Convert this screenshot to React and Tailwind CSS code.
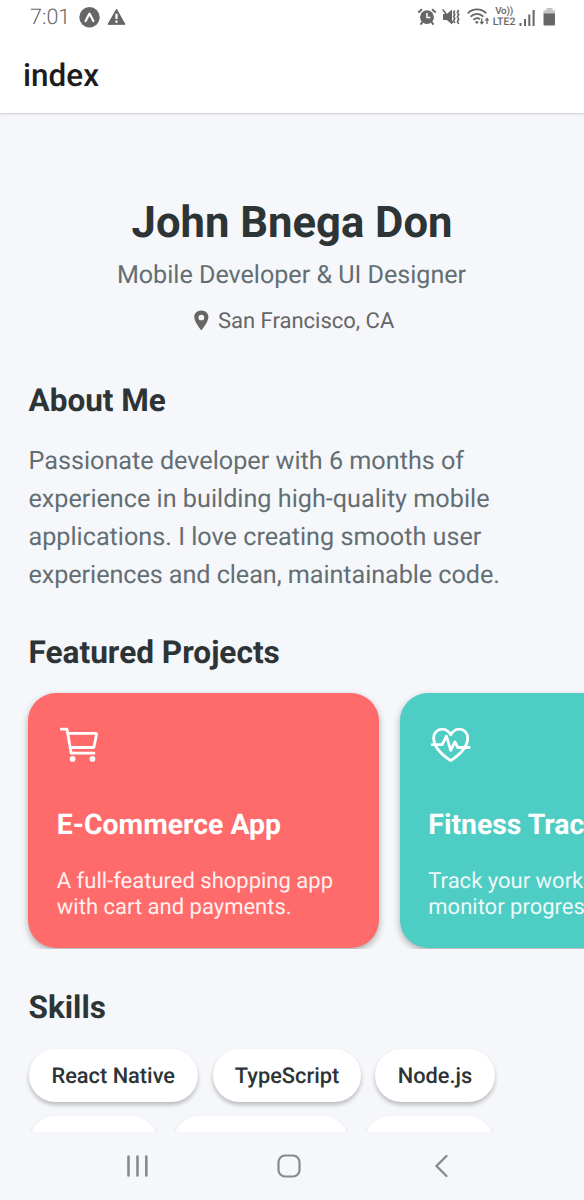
import { IoCartOutline, IoFitnessOutline, IoLocationSharp } from "react-icons/io5";

function AlarmIcon() {
  return (
    <svg width="20" height="20" viewBox="0 0 20 20" fill="none">
      <circle cx="10" cy="10.2" r="6.9" fill="#666" />
      <path d="M1.300 5.400 5 2.200M18.700 5.400 15 2.200" stroke="#666" strokeWidth="2" />
      <path d="M5.400 15 3.600 17.600M14.600 15l1.800 2.600" stroke="#666" strokeWidth="2" />
      <path d="M10 6v4.600h3.400" stroke="#fff" strokeWidth="1.500" />
    </svg>
  );
}

function MuteIcon() {
  return (
    <svg width="18" height="18" viewBox="0 0 18 18" fill="none">
      <path d="M1 6h3.800L10 1.400v15.200L4.800 12H1z" fill="#666" />
      <path d="M.6 1.500 11 15" stroke="#666" strokeWidth="1.600" />
      <path d="M12.800 2.500l-1.200 2 1.200 2-1.200 2 1.200 2-1.200 2 1.200 2.500M16.700 2l-1.300 2.300 1.300 2.300-1.300 2.300 1.300 2.300-1.300 2.300 1.300 2.500" stroke="#666" strokeWidth="1.600" />
    </svg>
  );
}

function WifiIcon() {
  return (
    <svg width="23" height="18" viewBox="0 0 23 18" fill="none" stroke="#666" strokeWidth="1.800">
      <path d="M.8 5.300C6 .1 14 .1 19.200 5.300M3.600 8.700C7.400 5 12.600 5 16.400 8.700M6.400 11.900C8.600 9.900 11.400 9.900 13 11.200" />
      <circle cx="9.800" cy="14.300" r="1.400" fill="#666" stroke="none" />
      <path d="M14.800 10.500v5M20 16v-5" strokeWidth="1.300" />
      <path d="M12.400 13.800h4.800l-2.400 3zM17.600 12.600h4.800L20 9.600z" fill="#666" stroke="none" />
    </svg>
  );
}

function StatusBar() {
  return (
    <div className="flex h-[34px] items-center pl-[30px] pr-[28px] text-[#666]">
      <span className="w-[41px] pt-[2px] text-[21.500px] leading-[32px] font-light whitespace-nowrap">7:01</span>
      <svg className="ml-[8px]" width="21" height="21" viewBox="0 0 21 21">
        <circle cx="10.500" cy="10.200" r="10.200" fill="#666" />
        <path d="M6.600 14 10.500 6.600 14.400 14" fill="none" stroke="#fff" strokeWidth="2.200" strokeLinecap="round" strokeLinejoin="round" />
      </svg>
      <svg className="ml-[7px]" width="19" height="18" viewBox="0 0 19 18">
        <path d="M9.500 1.300 18 16.300H1z" fill="#666" stroke="#666" strokeWidth="1" strokeLinejoin="round" />
        <path d="M9.500 5.800v5.200M9.500 12.500v2.200" stroke="#fff" strokeWidth="2.200" />
      </svg>
      <div className="ml-auto flex items-center">
        <AlarmIcon />
        <div className="ml-[5px] flex"><MuteIcon /></div>
        <div className="ml-[7px] flex"><WifiIcon /></div>
        <div className="ml-[3px] flex w-[22px] flex-col items-center text-[10.500px] leading-[10px] font-medium whitespace-nowrap">
          <span className="text-[10px] tracking-[-0.300px]">Vo))</span>
          <span>LTE2</span>
        </div>
        <svg className="ml-[4px]" width="16" height="17" viewBox="0 0 16 17" stroke="#666" strokeWidth="2">
          <path d="M1.500 14v3M6 10v7M10.300 5.500V17M14.600 1v16" />
        </svg>
        <svg className="ml-[8px]" width="13" height="18" viewBox="0 0 13 18">
          <path d="M3.500 0h6v2.300H12V6H.5V2.300h3z" fill="#c4c4c4" />
          <path d="M.5 5.500H12v11q0 1-1 1H1.500q-1 0-1-1z" fill="#666" />
        </svg>
      </div>
    </div>
  );
}

function ProjectCard({ className, icon, title, lines }) {
  return (
    <div className={`h-[255px] w-[350.500px] shrink-0 rounded-[28px] px-[28.500px] pt-[28.500px] whitespace-nowrap text-white shadow-[0_3px_7px_rgba(0,0,0,0.3)] ${className}`}>
      {icon}
      <h3 className="mt-[41px] text-[28.400px] leading-[34px] font-bold">{title}</h3>
      <div className="mt-[26.700px] text-[22px] leading-[26px] opacity-90">
        {lines.map((line) => <p key={line}>{line}</p>)}
      </div>
    </div>
  );
}

const chip = "h-[53px] shrink-0 rounded-full bg-white text-center text-[21.800px] leading-[55px] font-medium text-[#2d3436] shadow-[0_3px_4px_rgba(0,0,0,0.24)]";

export default function App() {
  return (
    <div className="flex h-[1200px] w-[584px] flex-col overflow-hidden bg-[#f5f7fb] font-[Roboto,sans-serif] [text-rendering:geometricPrecision]">
      <header className="z-10 h-[113px] shrink-0 bg-white shadow-[0_1px_2px_rgba(0,0,0,0.18)]">
        <StatusBar />
        <h1 className="pt-[20.500px] pl-[23px] text-[31.500px] leading-[42px] font-medium text-[#1c1c1e]">index</h1>
      </header>

      <main className="h-[1019px] shrink-0 overflow-hidden">
        <section className="flex flex-col items-center pt-[83px] whitespace-nowrap">
          <h2 className="text-[43.600px] leading-[54px] font-bold text-[#2d3436]">John Bnega Don</h2>
          <p className="mt-[9px] mr-[1px] text-[25.100px] leading-[34px] text-[#636e72]">Mobile Developer &amp; UI Designer</p>
          <div className="mt-[14px] flex items-center gap-[5.500px] text-[22px] leading-[30px] text-[#666]">
            <IoLocationSharp className="mt-[-3px] size-[22.700px]" />
            <span>San Francisco, CA</span>
          </div>
        </section>

        <section className="pt-[44px] pl-[28.500px] whitespace-nowrap">
          <h2 className="text-[31.500px] leading-[40px] font-bold text-[#2d3436]">About Me</h2>
          <div className="mt-[22px] text-[25.200px] leading-[38px] text-[#636e72]">
            <p>Passionate developer with 6 months of</p>
            <p>experience in building high-quality mobile</p>
            <p>applications. I love creating smooth user</p>
            <p className="tracking-[-0.060px]">experiences and clean, maintainable code.</p>
          </div>
        </section>

        <section className="pt-[38px]">
          <h2 className="pl-[28.500px] text-[31.600px] leading-[40px] font-bold whitespace-nowrap text-[#2d3436]">Featured Projects</h2>
          <div className="mt-[5px] flex h-[270.500px] gap-[21px] overflow-hidden pt-[15px] pl-[28.300px]">
            <ProjectCard
              className="bg-[#ff6b6b]"
              icon={<IoCartOutline className="size-[45.400px]" />}
              title="E-Commerce App"
              lines={["A full-featured shopping app", "with cart and payments."]}
            />
            <ProjectCard
              className="bg-[#4ecdc4]"
              icon={<IoFitnessOutline className="ml-[-0.500px] size-[45.400px]" />}
              title="Fitness Tracker"
              lines={["Track your workouts and", "monitor progress."]}
            />
          </div>
        </section>

        <section className="pt-[39px] pl-[28.500px]">
          <h2 className="text-[31.500px] leading-[40px] font-bold text-[#2d3436]">Skills</h2>
          <div className="mt-[21px] flex gap-[14.500px]">
            <div className={`${chip} w-[169.500px]`}>React Native</div>
            <div className={`${chip} w-[148px] pl-px`}>TypeScript</div>
            <div className={`${chip} w-[120px]`}>Node.js</div>
          </div>
          <div className="mt-[14px] flex gap-[15px]">
            <div className={`${chip} w-[129px]`} />
            <div className={`${chip} w-[176.500px]`} />
            <div className={`${chip} w-[130px]`} />
          </div>
        </section>
      </main>

      <nav className="flex h-[68px] shrink-0 items-center bg-[#f5f7fb] pl-[126px]">
        <svg width="24" height="24" viewBox="0 0 24 24" stroke="#87898d" strokeWidth="2.600" strokeLinecap="round">
          <path d="M2.500 2.500v19M11.500 2.500v19M20.300 2.500v19" />
        </svg>
        <svg className="ml-[127px]" width="24" height="24" viewBox="0 0 24 24" fill="none" stroke="#87898d" strokeWidth="2.200">
          <rect x="1.500" y="1.500" width="21" height="21" rx="6.500" />
        </svg>
        <svg className="ml-[133px]" width="16" height="24" viewBox="0 0 16 24" fill="none" stroke="#87898d" strokeWidth="2.300" strokeLinecap="round">
          <path d="M12.500 2 2.500 12l10 10" />
        </svg>
      </nav>
    </div>
  );
}
